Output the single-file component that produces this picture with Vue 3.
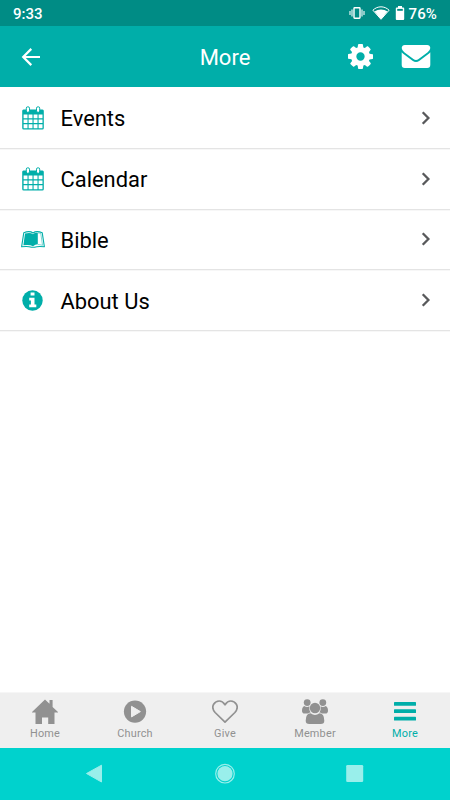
<script setup>
const rows = [
  { label: 'Events', icon: 'calendar' },
  { label: 'Calendar', icon: 'calendar' },
  { label: 'Bible', icon: 'book' },
  { label: 'About Us', icon: 'info' }
]
const tabs = ['Home', 'Church', 'Give', 'Member', 'More']
</script>

<template>
  <div class="screen">
    <div class="status">
      <span class="clock">9:33</span>
      <div class="indicators">
        <svg class="vibrate" width="16" height="14" viewBox="0 0 16 14" fill="none" stroke="currentColor">
          <rect x="5" y="1.7" width="6" height="10.6" rx=".7" stroke-width="1.4" />
          <path d="M3 3.5v7M13 3.5v7M1 5v4M15 5v4" stroke-width="1.1" />
        </svg>
        <svg class="wifi" width="18" height="14" viewBox="0 0 18 14">
          <path d="M.9 4.200C5.500-.3 12.500-.3 17.100 4.200L9 13.300z" fill="none" stroke="currentColor" stroke-width="1" stroke-linejoin="round" />
          <path d="M2.500 5.400C6.200 2.700 11.800 2.700 15.500 5.400L9 13.300z" fill="currentColor" />
        </svg>
        <svg class="battery" width="10" height="14" viewBox="0 0 10 14">
          <path d="M3 0h4v1.500h1.300q.9 0 .9.900v10.700q0 .9-.9.900H1.700q-.9 0-.9-.9V2.400q0-.9.900-.9H3z" fill="currentColor" />
          <path d="M2.200 2.900h5.600v1.900H2.200z" fill="#008c85" />
        </svg>
        <span class="percent">76%</span>
      </div>
    </div>

    <header class="header">
      <svg class="back" width="20" height="20" viewBox="0 0 20 20" fill="none" stroke="currentColor" stroke-width="2.200">
        <path d="M19 10H2.500M10.300 1.900 2.200 10l8.100 8.100" />
      </svg>
      <h1>More</h1>
      <div class="actions">
        <svg width="25" height="25" viewBox="0 0 1536 1536" fill="currentColor">
          <path d="M1024 768q0-106-75-181t-181-75-181 75-75 181 75 181 181 75 181-75 75-181zm512-109v222q0 12-8 23t-20 13l-185 28q-19 54-39 91 35 50 107 138 10 12 10 25t-9 23q-27 37-99 108t-94 71q-12 0-26-9l-138-108q-44 23-91 38-16 136-29 186-7 28-36 28H657q-14 0-24.500-8.500T621 1506l-28-184q-49-16-90-37l-141 107q-10 9-25 9-14 0-25-11-126-114-165-168-7-10-7-23 0-12 8-23 15-21 51-66.500t54-70.500q-27-50-41-99L29 913q-13-2-21-12.500T0 877V655q0-12 8-23t19-13l186-28q14-46 39-92-40-57-107-138-10-12-10-24 0-10 9-23 26-36 98.500-107.500T337 135q13 0 26 10l138 107q44-23 91-38 16-136 29-186 7-28 36-28h222q14 0 24.500 8.500T915 30l28 184q49 16 90 37l142-107q9-9 24-9 13 0 25 10 129 119 165 170 7 8 7 22 0 12-8 23-15 21-51 66.500t-54 70.500q26 50 41 98l183 28q13 2 21 12.500t8 23.500z" />
        </svg>
        <svg width="30" height="24" viewBox="0 0 30 24" fill="currentColor">
          <path d="M3.800 0h22.400Q29 .1 29.300 3.100 29.300 5 26.700 7.200L17.600 14q-2.600 2-5.200 0L3.300 7.200Q.7 5 .7 3.100 1 .1 3.800 0z" />
          <path d="M.7 7.300q.5.700 1.500 1.400l9.300 7q3.500 2.600 7 0l9.300-7q1-.7 1.500-1.400v12.500q0 3.300-3.100 3.300H3.800Q.7 23.100.7 19.800z" />
        </svg>
      </div>
    </header>

    <main class="content">
      <div v-for="row in rows" :key="row.label" class="row">
        <span class="row-icon">
          <svg v-if="row.icon === 'calendar'" width="22" height="24" viewBox="0 0 22 24">
            <path d="M1.500 3.500h19q1.300 0 1.300 1.500v17q0 1.500-1.500 1.500H1.700Q.2 23.500.2 22V5q0-1.500 1.300-1.500z" fill="currentColor" />
            <path d="M1.600 8.500h3.900v3.800H1.600zm5 0h3.900v3.800H6.600zm5 0h3.900v3.800h-3.900zm5 0h3.900v3.800h-3.900zM1.600 13.400h3.900v3.700H1.600zm5 0h3.900v3.700H6.600zm5 0h3.900v3.700h-3.900zm5 0h3.900v3.700h-3.900zM1.600 18.200h3.900v4H1.600zm5 0h3.900v4H6.600zm5 0h3.900v4h-3.900zm5 0h3.900v4h-3.900z" fill="#fff" />
            <rect x="4.300" y=".8" width="3.200" height="5.500" rx="1.400" fill="#fff" stroke="currentColor" stroke-width="1" />
            <rect x="14.500" y=".8" width="3.200" height="5.500" rx="1.400" fill="#fff" stroke="currentColor" stroke-width="1" />
          </svg>
          <svg v-else-if="row.icon === 'book'" class="book" width="24" height="18" viewBox="0 0 24 18">
            <path d="M2.800 1.700Q8.600-.6 12 2 15.400-.6 21.200 1.700L23.400 15.800Q17 14.900 13.500 16.300h-3Q7 14.900.6 15.800z" fill="#fff" stroke="currentColor" stroke-width="1.100" stroke-linejoin="round" />
            <path d="M4 2.600Q9.200 1 12 3.200 13.800 1.600 16.800 1.900V13.300Q14.300 13.500 12 15.200 8.500 13.400 2.400 14.300z" fill="currentColor" />
            <path d="M16.800 1.900q1.700.1 3 .7l1.700 11.700q-2.400-.7-4.700-.8" fill="none" stroke="currentColor" stroke-width=".5" />
          </svg>
          <svg v-else width="21" height="21" viewBox="0 0 21 21">
            <circle cx="10.500" cy="10.500" r="10.200" fill="currentColor" />
            <path d="M8.600 2.500h3.900v3H8.600zM7.200 7.800h5.300v6.700h1.800v2.700H7.200v-2.700h1.700v-4H7.200z" fill="#fff" />
          </svg>
        </span>
        <span class="label">{{ row.label }}</span>
        <svg class="chevron" width="10" height="14" viewBox="0 0 10 14" fill="none" stroke="#58595b" stroke-width="2.300">
          <path d="M1.700 1.300 7.400 7l-5.700 5.700" />
        </svg>
      </div>
    </main>

    <nav class="tabs">
      <div v-for="tab in tabs" :key="tab" class="tab" :class="{ active: tab === 'More' }">
        <svg v-if="tab === 'Home'" width="26" height="26" viewBox="0 0 26 26" fill="currentColor">
          <path d="M13 .5l4.500 4.300V1h3.100v6.900L26 13v.5h-3.500V25h-6.300v-6.500H10V25H3.500V13.500H0V13z" />
        </svg>
        <svg v-else-if="tab === 'Church'" width="26" height="26" viewBox="0 0 26 26">
          <circle cx="13" cy="12.600" r="11.100" fill="currentColor" />
          <path d="M9.500 7.300v10.600l8.900-5.300z" fill="#efefef" stroke="#efefef" stroke-linejoin="round" />
        </svg>
        <svg v-else-if="tab === 'Give'" width="26" height="26" viewBox="0 0 26 26" fill="none" stroke="currentColor" stroke-width="1.700" stroke-linejoin="round">
          <path d="M13 23.100 3.100 13.500C-2.500 6.800 3.500 2 7.200 2c2.500 0 4.300 1.500 5.800 3.800C14.500 3.500 16.300 2 18.800 2c3.700 0 9.700 4.800 4.100 11.500z" />
        </svg>
        <svg v-else-if="tab === 'Member'" width="26" height="26" viewBox="0 0 26 26" fill="currentColor">
          <circle cx="5.200" cy="3.600" r="3.400" /><circle cx="20.800" cy="3.600" r="3.400" />
          <path d="M2.200 7q3 1.800 5.200.2-.6 4.200 1.200 6.300-1.500.2-2.600 1.100H2.700Q0 14.600 0 11.800 0 8 2.200 7zm21.600 0q-3 1.800-5.200.2.600 4.200-1.200 6.300 1.500.2 2.600 1.100h3.300q2.700 0 2.700-2.800 0-3.800-2.200-4.800z" />
          <circle cx="13" cy="9" r="5.200" />
          <path d="M8.600 14.300q4.400 3.200 8.800 0 4.900.2 4.900 7.400 0 3.300-3.500 3.300H7.200q-3.500 0-3.500-3.300 0-7.200 4.900-7.400z" />
        </svg>
        <svg v-else width="26" height="26" viewBox="0 0 26 26" fill="currentColor">
          <rect x="2" y="3" width="22" height="3.800" rx=".6" />
          <rect x="2" y="10.300" width="22" height="3.800" rx=".6" />
          <rect x="2" y="17.700" width="22" height="3.800" rx=".6" />
        </svg>
        <span>{{ tab }}</span>
      </div>
    </nav>

    <div class="system">
      <svg width="24" height="24" viewBox="0 0 24 24">
        <path d="M3.500 11.500 18.500 3.200v16.800z" fill="#99efeb" stroke="#99efeb" stroke-linejoin="round" />
      </svg>
      <svg width="24" height="24" viewBox="0 0 24 24">
        <circle cx="12" cy="11.700" r="9.300" fill="none" stroke="#99efeb" stroke-width="1.200" />
        <circle cx="12" cy="11.700" r="7.600" fill="#99efeb" />
      </svg>
      <svg width="24" height="24" viewBox="0 0 24 24">
        <rect x="3.200" y="3" width="17" height="17" rx="1.300" fill="#99efeb" />
      </svg>
    </div>
  </div>
</template>

<style>
body { margin: 0; }
</style>

<style scoped>
.screen {
  width: 450px;
  height: 800px;
  display: flex;
  flex-direction: column;
  overflow: hidden;
  background: #fff;
  color: #000;
  font-family: Roboto, sans-serif;
}
svg { display: block; flex: none; }
.status {
  height: 26px;
  box-sizing: border-box;
  padding: 1px 13px 0;
  display: flex;
  align-items: center;
  justify-content: space-between;
  background: #008c85;
  color: #fff;
  font: 500 15px/20px Roboto, sans-serif;
}
.indicators { display: flex; align-items: center; }
.vibrate, .wifi, .battery { margin-top: -1px; }
.wifi { margin-left: 7px; }
.battery { margin-left: 5px; margin-right: 4px; }
.percent { letter-spacing: .1px; }
.header {
  height: 61px;
  box-sizing: border-box;
  padding: 0 19px 0 21px;
  display: grid;
  grid-template-columns: 83px 1fr 83px;
  align-items: center;
  background: #00aea9;
  color: #fff;
}
h1 {
  margin: 3px 2px 0 0;
  text-align: center;
  font-size: 22px;
  line-height: 28px;
  font-weight: 400;
}
.actions {
  display: flex;
  align-items: center;
  justify-content: space-between;
}
.content { flex: 1; padding-top: 1px; }
.row {
  height: 60.800px;
  box-sizing: border-box;
  padding: 0 19px 0 20px;
  display: flex;
  align-items: center;
  border-bottom: 1px solid #e4e4e4;
  box-shadow: 0 1px 0 #f7f7f7;
}
.row-icon {
  width: 25px;
  display: flex;
  justify-content: center;
  color: #00aea9;
}
.book { margin-top: 2px; }
.label {
  flex: 1;
  margin-left: 15.500px;
  padding-top: 3px;
  font-size: 21.900px;
  line-height: 28px;
}
.tabs {
  height: 56px;
  box-sizing: border-box;
  padding-top: 7px;
  display: flex;
  background: #efefef;
  border-top: 1px solid #f6f6f6;
}
.tab {
  flex: 1;
  display: flex;
  flex-direction: column;
  align-items: center;
  color: #919191;
  font-size: 10.900px;
  line-height: 13px;
  letter-spacing: .2px;
}
.tab svg { margin-top: -1px; }
.tab span { margin-top: 2px; }
.tab.active { color: #00aea9; }
.system {
  height: 52px;
  padding: 0 83px;
  display: flex;
  align-items: center;
  justify-content: space-between;
  background: #00d2cd;
}
</style>
